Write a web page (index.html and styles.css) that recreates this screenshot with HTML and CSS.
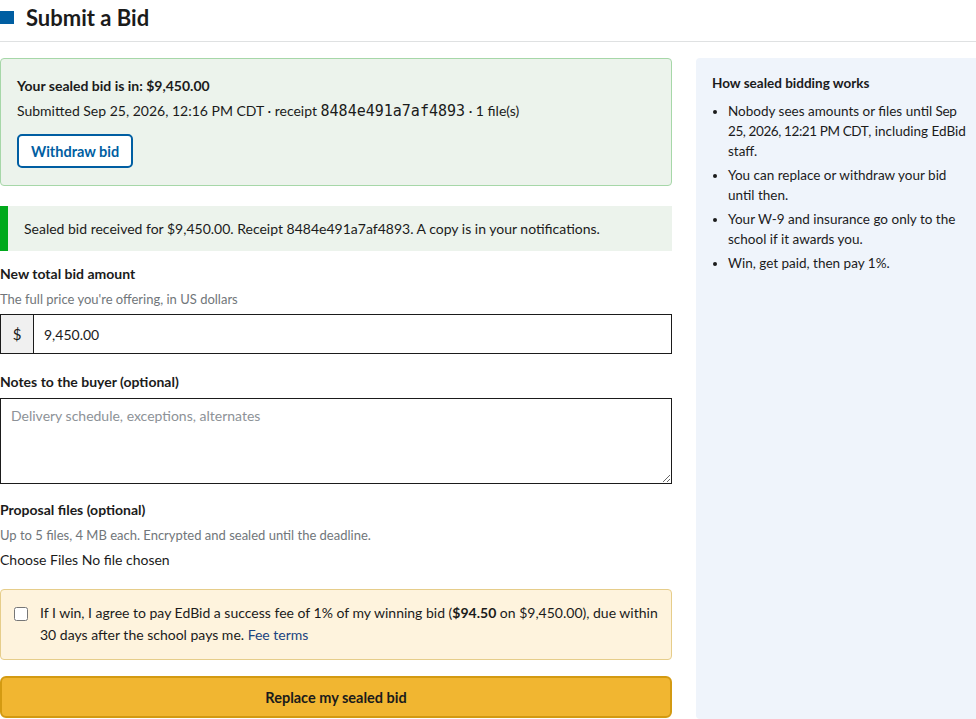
FILE: index.html
```html
<!DOCTYPE html>
<html lang="en">
<head>
  <meta charset="UTF-8" />
  <meta name="viewport" content="width=device-width, initial-scale=1.0"/>
  <title>Submit a Bid</title>
  <link rel="stylesheet" href="styles.css">
</head>
<body>
  <div class="page-head">
    <span class="head-mark"></span>
    <h1>Submit a Bid</h1>
  </div>

  <div class="layout">
    <div class="main">
      <div class="bid-card">
        <p class="bid-title">Your sealed bid is in: $9,450.00</p>
        <p class="bid-meta">Submitted Sep 25, 2026, 12:16 PM CDT · receipt <span class="mono">8484e491a7af4893</span> · 1 file(s)</p>
        <button class="btn-outline" type="button">Withdraw bid</button>
      </div>

      <div class="alert">Sealed bid received for $9,450.00. Receipt 8484e491a7af4893. A copy is in your notifications.</div>

      <form class="bid-form">
        <label class="field-label" for="amount">New total bid amount</label>
        <div class="hint">The full price you're offering, in US dollars</div>
        <div class="money">
          <span class="money-prefix">$</span>
          <input id="amount" type="text" value="9,450.00" />
        </div>

        <label class="field-label" for="notes">Notes to the buyer (optional)</label>
        <textarea id="notes" placeholder="Delivery schedule, exceptions, alternates"></textarea>

        <label class="field-label">Proposal files (optional)</label>
        <div class="hint">Up to 5 files, 4 MB each. Encrypted and sealed until the deadline.</div>
        <div class="file-line">Choose Files No file chosen</div>

        <div class="fee-box">
          <input type="checkbox" id="fee" />
          <label for="fee">If I win, I agree to pay EdBid a success fee of 1% of my winning bid (<strong>$94.50</strong> on $9,450.00), due within 30 days after the school pays me. <a href="#">Fee terms</a></label>
        </div>

        <button class="btn-primary" type="submit">Replace my sealed bid</button>
      </form>
    </div>

    <aside class="side">
      <h3>How sealed bidding works</h3>
      <ul>
        <li>Nobody sees amounts or files until <time>Sep 25, 2026, 12:21 PM CDT</time>, including EdBid staff.</li>
        <li>You can replace or withdraw your bid until then.</li>
        <li>Your W-9 and insurance go only to the school if it awards you.</li>
        <li>Win, get paid, then pay 1%.</li>
      </ul>
    </aside>
  </div>
</body>
</html>
```

FILE: styles.css
```css
body { font-family: Lato, "Open Sans", sans-serif; color: #1b1b1b; background: #fff; margin: 0; padding: 0; }
p { margin: 0; }

.page-head { display: flex; align-items: center; gap: 12px; height: 34px; padding-bottom: 7px; border-bottom: 1px solid #dfe1e2; }
.head-mark { width: 14px; height: 13px; background: #005ea2; }
h1 { margin: 0; font-size: 22px; font-weight: 700; }

.layout { display: flex; gap: 24px; margin-top: 16px; }
.main { width: 672px; flex: none; }

.bid-card {
  background: #ecf3ec;
  border: 1px solid #a6d7a8;
  border-radius: 4px;
  padding: 17px 16px;
}
.bid-title { font-weight: 700; font-size: 14px; line-height: 20px; }
.bid-meta { font-size: 14px; line-height: 22px; margin-top: 4px; }
.mono { font-family: "DejaVu Sans Mono", monospace; font-size: 15px; }
.btn-outline {
  margin-top: 12px;
  height: 34px;
  padding: 0 12px;
  background: #fff;
  border: 2px solid #005ea2;
  border-radius: 5px;
  color: #005ea2;
  font: 700 14.5px Lato, sans-serif;
}

.alert {
  margin-top: 20px;
  background: #ecf3ec;
  border-left: 8px solid #00a91c;
  padding: 12px 16px;
  font-size: 14px;
  line-height: 21px;
}

.bid-form { display: flex; flex-direction: column; }
.field-label { font-weight: 700; font-size: 14px; margin-top: 13px; line-height: 20px; }
.field-label + textarea { margin-top: 6px; }
.money + .field-label { margin-top: 18px; }
textarea + .field-label { margin-top: 16px; }
.hint { color: #71767a; font-size: 13px; margin-top: 6px; line-height: 18px; }
.money { display: flex; height: 40px; margin-top: 6px; }
.money-prefix {
  width: 33px;
  display: flex; align-items: center; justify-content: center;
  background: #f0f0f0;
  border: 1px solid #1b1b1b;
  border-right: none;
  font-size: 15px;
  box-sizing: border-box;
}
.money input {
  flex: 1;
  border: 1px solid #1b1b1b;
  padding: 0 10px;
  font: 14px Lato, sans-serif;
  color: #1b1b1b;
}
textarea {
  height: 86px;
  box-sizing: border-box;
  border: 1px solid #1b1b1b;
  padding: 8px 10px;
  font: 14px Lato, sans-serif;
  resize: vertical;
}
textarea::placeholder { color: #8d9297; }
.file-line { font-size: 14px; margin-top: 6px; line-height: 20px; }

.fee-box {
  display: flex;
  align-items: flex-start;
  gap: 12px;
  margin-top: 19px;
  background: #fef3dd;
  border: 1px solid #e6cd8a;
  border-radius: 4px;
  padding: 12px 8px 13px 13px;
  font-size: 14px;
  line-height: 22px;
}
.fee-box input { margin: 5px 0 0; width: 14px; height: 14px; flex: none; }
.fee-box a { color: #1a4480; text-decoration: none; }

.btn-primary {
  margin-top: 16px;
  height: 42px;
  background: #f1b631;
  border: 2px solid #d39a12;
  border-radius: 6px;
  color: #1b1b1b;
  font: 700 14.5px Lato, sans-serif;
}

.side {
  flex: 1;
  background: #eff4fb;
  border-radius: 4px 0 0 4px;
  padding: 15px 8px 15px 16px;
  font-size: 13.5px;
  line-height: 20px;
  min-height: 661px;
  box-sizing: border-box;
}
.side h3 { margin: 0; font-size: 13.5px; font-weight: 700; line-height: 20px; }
.side ul { margin: 8px 0 0; padding-left: 16px; }
.side li { margin-bottom: 4px; }
.side time { letter-spacing: -0.4px; }
```
